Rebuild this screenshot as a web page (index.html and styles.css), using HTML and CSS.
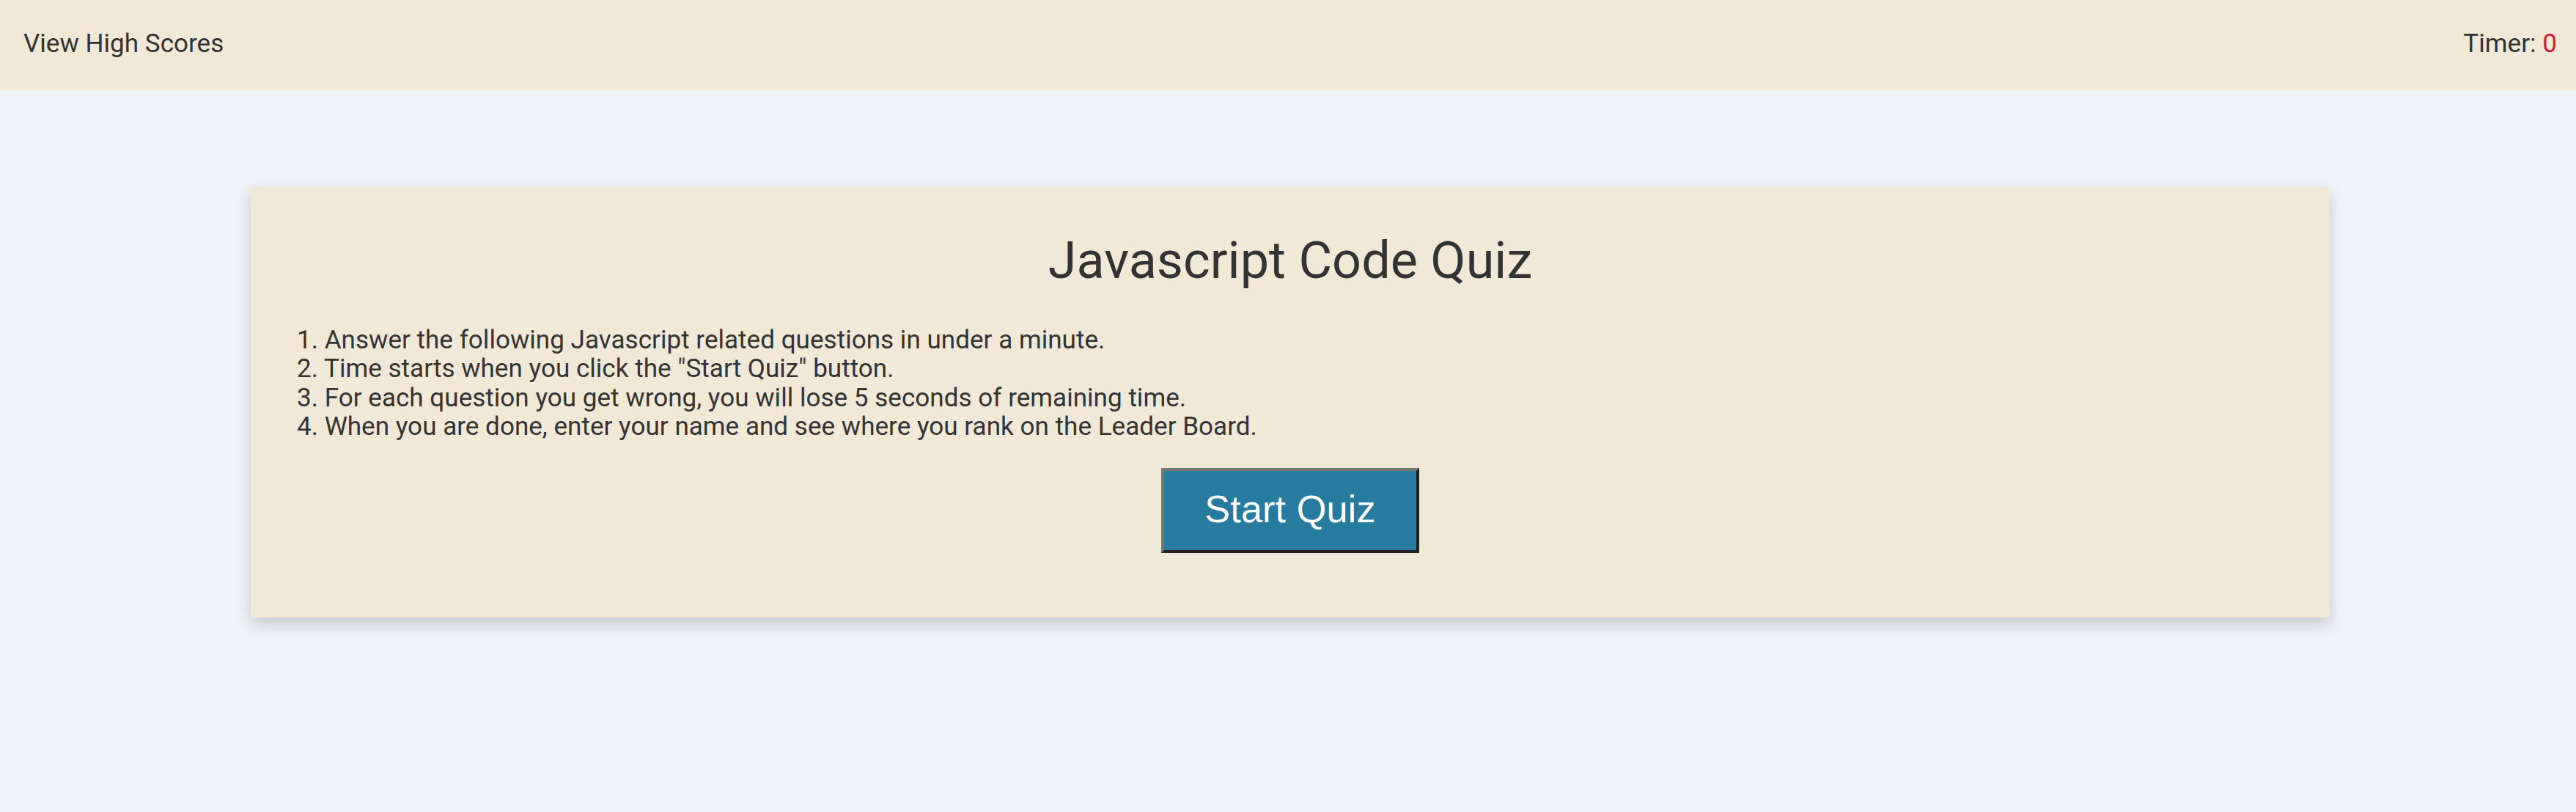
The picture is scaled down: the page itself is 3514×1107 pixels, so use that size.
FILE: index.html
```html
<!DOCTYPE html>
<html lang="en">
<head>
<meta charset="utf-8">
<title>Javascript Code Quiz</title>
<link rel="stylesheet" href="styles.css">
</head>
<body>
<header class="topbar">
  <a class="scores-link">View High Scores</a>
  <div class="timer">Timer: <span class="timer-value">0</span></div>
</header>
<main class="main">
  <section class="card">
    <h1 class="title">Javascript Code Quiz</h1>
    <div class="rules">
      <p>1. Answer the following Javascript related questions in under a minute.</p>
      <p>2. Time starts when you click the "Start Quiz" button.</p>
      <p>3. For each question you get wrong, you will lose 5 seconds of remaining time.</p>
      <p>4. When you are done, enter your name and see where you rank on the Leader Board.</p>
    </div>
    <div class="actions">
      <button class="start-btn" type="button">Start Quiz</button>
    </div>
  </section>
</main>
</body>
</html>
```
FILE: styles.css
```css
html, body {
  margin: 0;
  padding: 0;
}
body {
  background: #eff3f7;
  font-family: Roboto, "Noto Sans", sans-serif;
  color: #333333;
  min-height: 1107px;
}
.topbar {
  display: flex;
  justify-content: space-between;
  align-items: flex-start;
  height: 123px;
  box-sizing: border-box;
  padding: 38px 26px 0 32px;
  background: #f1e9d6;
  font-size: 35.1px;
  line-height: 42px;
}
.scores-link {
  color: #333333;
  cursor: pointer;
}
.timer-value {
  color: #dc143c;
}
.main {
  padding-top: 132px;
}
.card {
  width: 2836px;
  margin: 0 auto;
  transform: translateX(3px);
  box-sizing: border-box;
  padding: 59px 63px 88px;
  background: #f1e9d6;
  box-shadow: 0 9px 20px rgba(0, 0, 0, 0.18);
}
.title {
  margin: 0;
  text-align: center;
  font-size: 70.2px;
  font-weight: 400;
  line-height: 82px;
  color: #333333;
}
.rules {
  margin-top: 48px;
  font-size: 35.1px;
  line-height: 39.3px;
}
.rules p {
  margin: 0;
}
.actions {
  display: flex;
  justify-content: center;
  margin-top: 37px;
}
.start-btn {
  font-family: "Liberation Sans", Arial, sans-serif;
  font-size: 52.5px;
  line-height: 60px;
  white-space: nowrap;
  color: #ffffff;
  background: #267b9e;
  border: 4px solid #767676;
  border-color: #767676 #222222 #222222 #767676;
  padding: 22px 55px 26px;
  cursor: pointer;
}
```
